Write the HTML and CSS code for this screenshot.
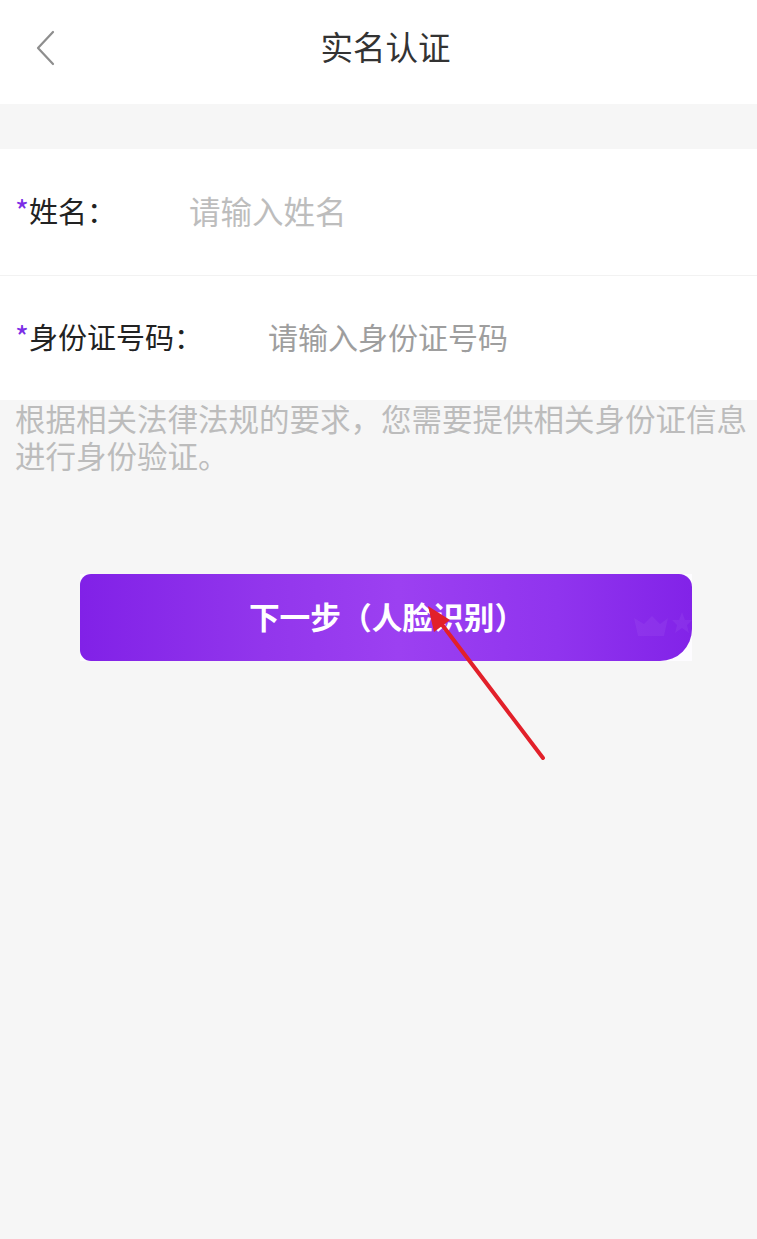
FILE: index.html
```html
<!DOCTYPE html>
<html lang="zh-CN">
<head>
<meta charset="utf-8">
<title>实名认证</title>
<link rel="stylesheet" href="styles.css">
</head>
<body>
<div class="page">
  <header class="topbar">
    <svg class="back" width="24" height="36" viewBox="0 0 24 36"><path d="M19 2 L4 18 L19 34" fill="none" stroke="#8e8e8e" stroke-width="2.2" stroke-linecap="round" stroke-linejoin="round"/></svg>
    <h1 class="title">实名认证</h1>
  </header>
  <div class="spacer"></div>
  <section class="form">
    <div class="row row-name">
      <span class="label"><span class="req">*</span>姓名：</span>
      <span class="ph ph-name">请输入姓名</span>
    </div>
    <div class="row row-id">
      <span class="label"><span class="req">*</span>身份证号码：</span>
      <span class="ph ph-id">请输入身份证号码</span>
    </div>
  </section>
  <p class="note">根据相关法律法规的要求，您需要提供相关身份证信息进行身份验证。</p>
  <div class="btn-wrap">
    <div class="btn">
      <span class="btn-text">下一步（人脸识别）</span>
      <svg class="deco" width="60" height="40" viewBox="0 0 60 40"><path d="M2 10 L12 16 L20 8 L28 16 L36 10 L32 28 L6 28 Z" fill="#ffffff" opacity="0.05"/><path d="M50 4 L53 12 L60 12 L55 17 L57 25 L50 20 L43 25 L45 17 L40 12 L47 12 Z" fill="#ffffff" opacity="0.05"/></svg>
    </div>
  </div>
  <svg class="arrow" width="757" height="1239" viewBox="0 0 757 1239"><line x1="543" y1="758" x2="440" y2="622" stroke="#e2202a" stroke-width="4" stroke-linecap="round"/><polygon points="428,606 450,620 434,632" fill="#e2202a"/></svg>
</div>
</body>
</html>
```
FILE: styles.css
```css
* { box-sizing: border-box; }
html, body { margin: 0; padding: 0; }
body {
  background: #f6f6f6;
  font-family: "Noto Sans CJK SC", "Noto Sans", sans-serif;
  width: 757px;
  height: 1239px;
  overflow: hidden;
}
.page { position: relative; height: 1239px; }
.topbar {
  height: 104px;
  background: #fff;
  display: flex;
  align-items: center;
  justify-content: center;
  position: relative;
}
.back { position: absolute; left: 34px; top: 30px; }
.title {
  margin: 0 0 12px 14px;
  font-size: 32.5px;
  font-weight: 400;
  color: #333;
  line-height: 40px;
}
.spacer { height: 45px; }
.form { background: #fff; }
.row {
  display: flex;
  align-items: center;
  padding-left: 15px;
}
.row-name { height: 127px; border-bottom: 1px solid #f2f2f2; }
.row-id { height: 124px; padding-bottom: 4px; }
.label {
  font-size: 29px;
  color: #222;
  line-height: 40px;
}
.row-name .label { width: 174px; margin-top: -4px; }
.row-id .label { width: 253px; }
.req { color: #7b2ee6; font-size: 30px; }
.ph { color: #bdbdbd; line-height: 40px; }
.ph-name { font-size: 31.5px; margin-top: -4px; }
.ph-id { font-size: 30px; color: #9e9e9e; }
.note {
  margin: 0;
  padding: 0 10px 0 15px;
  font-size: 30.5px;
  line-height: 37px;
  color: #bcbcbc;
}
.btn-wrap {
  margin: 100px 0 0 80px;
  width: 612px;
  height: 87px;
  background: #fdfcff;
}
.btn {
  position: relative;
  height: 87px;
  border-radius: 11px 13px 32px 11px;
  background: linear-gradient(90deg, #8121e7 0%, #9236ec 30%, #9c40f1 52%, #9034ee 78%, #8223e8 100%);
  display: flex;
  align-items: center;
  justify-content: center;
  overflow: hidden;
}
.btn-text {
  color: #fff;
  font-size: 30.7px;
  font-weight: 700;
  line-height: 40px;
  margin-left: 2px;
  margin-top: -4px;
}
.deco { position: absolute; right: 0; top: 34px; }
.arrow { position: absolute; left: 0; top: 0; pointer-events: none; }
```
